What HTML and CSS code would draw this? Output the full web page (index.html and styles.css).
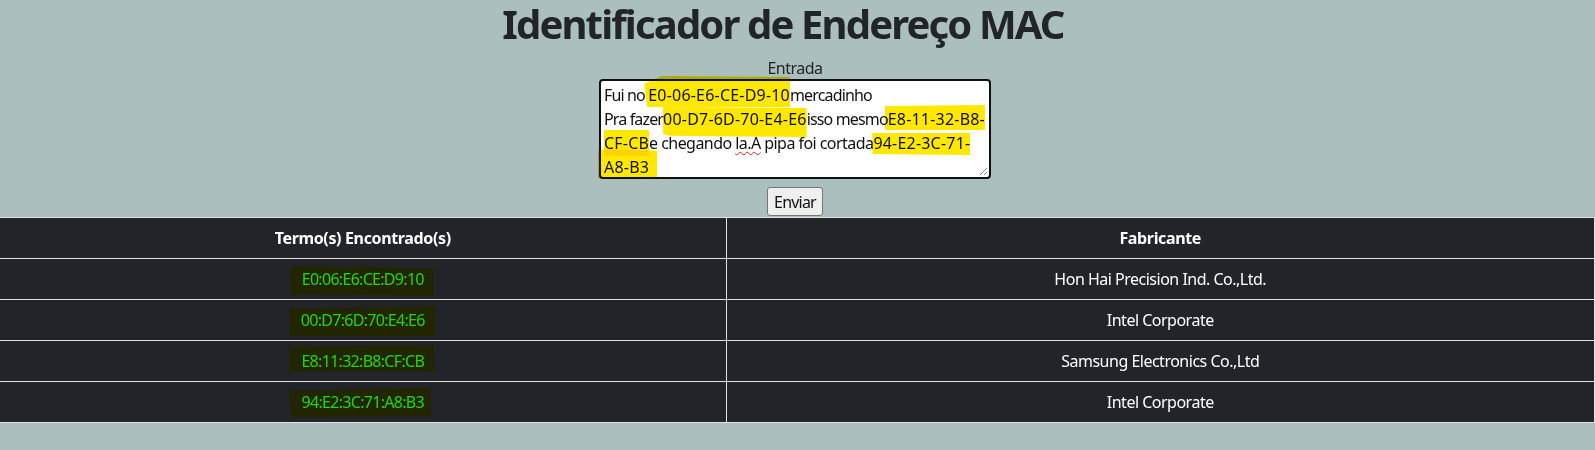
FILE: index.html
```html
<!DOCTYPE html>
<html lang="pt-BR">
<head>
<meta charset="utf-8">
<title>Identificador de Endereço MAC</title>
<link rel="stylesheet" href="styles.css">
</head>
<body>
<h1 class="title">Identificador de Endereço MAC</h1>
<form class="form">
  <label class="label">Entrada</label>
  <div class="input">
    <div class="line">Fui no <span class="mk mk1">E0-06-E6-CE-D9-10</span>mercadinho</div>
    <div class="line">Pra fazer<span class="mk mk2">00-D7-6D-70-E4-E6</span>isso mesmo<span class="mk mk3">E8-11-32-B8-</span></div>
    <div class="line"><span class="mk mk4">CF-CB</span><span class="loose">e chegando <span class="spell">la.A</span> pipa foi cortada</span><span class="mk mk5">94-E2-3C-71-</span></div>
    <div class="line"><span class="mk mk6">A8-B3</span></div>
    <svg class="grip" width="9" height="9" viewBox="0 0 9 9"><path d="M8 1 L1 8 M8 5 L5 8" stroke="#8a8a8a" stroke-width="1"/></svg>
  </div>
  <button class="btn" type="button">Enviar</button>
</form>
<table class="results">
  <colgroup><col class="col-term"><col class="col-vendor"></colgroup>
  <thead>
    <tr><th>Termo(s) Encontrado(s)</th><th>Fabricante</th></tr>
  </thead>
  <tbody>
    <tr><td><span class="cm cm1">E0:06:E6:CE:D9:10</span></td><td>Hon Hai Precision Ind. Co.,Ltd.</td></tr>
    <tr><td><span class="cm cm2">00:D7:6D:70:E4:E6</span></td><td>Intel Corporate</td></tr>
    <tr><td><span class="cm cm3">E8:11:32:B8:CF:CB</span></td><td>Samsung Electronics Co.,Ltd</td></tr>
    <tr><td><span class="cm cm4">94:E2:3C:71:A8:B3</span></td><td>Intel Corporate</td></tr>
  </tbody>
</table>
</body>
</html>
```

FILE: styles.css
```css
* { box-sizing: border-box; }
html, body { margin: 0; padding: 0; }
body {
  background: #abbfbe;
  color: #212529;
  font-family: "Noto Sans", "Open Sans", sans-serif;
  font-size: 16px;
  line-height: 1.5;
  letter-spacing: -0.5px;
  height: 450px;
  overflow: hidden;
}
.title {
  margin: 0 0 8px;
  padding-right: 29px;
  font-size: 40px;
  line-height: 48px;
  font-weight: 700;
  letter-spacing: -1.85px;
  text-align: center;
}
.form {
  display: flex;
  flex-direction: column;
  align-items: center;
  margin: 0;
  padding-right: 5px;
}
.label { line-height: 24px; }
.input {
  position: relative;
  margin-top: -1px;
  width: 392px;
  height: 100px;
  background: #fff;
  border: 2px solid #101010;
  border-radius: 4px;
  padding: 2px 3px;
  color: #111;
  line-height: 24px;
  letter-spacing: -0.85px;
  white-space: nowrap;
}
.line { height: 24px; }
.loose { letter-spacing: -0.55px; }
.spell {
  text-decoration: underline wavy #e0201c;
  text-decoration-thickness: 1px;
  text-decoration-skip-ink: none;
  text-underline-offset: 2px;
}
.grip { position: absolute; right: 1px; bottom: 1px; }
.mk, .cm { position: relative; }
.mk { letter-spacing: 0.2px; }
.mk::before, .cm::before {
  content: "";
  position: absolute;
  background: #ffe800;
  mix-blend-mode: multiply;
  pointer-events: none;
}
.mk1::before { left: -4px; right: 0; top: -8px; bottom: -1px; clip-path: polygon(0 25%, 12% 0, 100% 3%, 100% 100%, 2% 100%); }
.mk2::before { left: 0; right: 0; top: -1px; bottom: -7px; clip-path: polygon(0 0, 100% 3%, 100% 100%, 4% 96%, 0 90%); }
.mk3::before { left: -3px; right: 0; top: -3px; bottom: 0; clip-path: polygon(0 4%, 100% 0, 100% 100%, 0 100%); }
.mk4::before { left: 0; right: 0; top: -2px; bottom: -2px; }
.mk5::before { left: -1px; right: 0; top: 1px; bottom: -1px; clip-path: polygon(0 0, 100% 0, 100% 100%, 0 96%); }
.mk6::before { left: -6px; right: -8px; top: -8px; bottom: -1px; clip-path: polygon(0 5%, 100% 8%, 100% 100%, 0 98%); }
.btn {
  margin-top: 8px;
  height: 29px;
  padding: 1px 6px;
  font: inherit;
  font-size: 16px;
  line-height: 24px;
  letter-spacing: -0.8px;
  color: #111;
  background: #efefef;
  border: 1px solid #767676;
  border-radius: 3px;
}
.results {
  margin-top: 1px;
  width: 100%;
  border-collapse: collapse;
  table-layout: fixed;
  background: #212529;
  color: #fff;
}
.col-term { width: 726px; }
.results th, .results td {
  border: 1px solid #e4e0e0;
  padding: 8px;
  height: 41px;
  text-align: center;
  font-size: 16px;
  line-height: 24px;
}
.results th:first-child, .results td:first-child { border-left: none; }
.results th { font-weight: 700; letter-spacing: -0.35px; }
.cm { color: #22d818; letter-spacing: -0.7px; }
.cm::before { left: -11px; right: -10px; top: -2px; bottom: -6px; background: #ffff00; }
.cm1::before { clip-path: polygon(0 0, 100% 8%, 100% 100%, 5% 96%, 0 100%); }
.cm2::before { top: -3px; bottom: -5px; clip-path: polygon(0 8%, 100% 0, 100% 100%, 0 100%); }
.cm3::before { top: -5px; bottom: 0; left: -12px; clip-path: polygon(0 6%, 100% 0, 100% 100%, 0 100%); }
.cm4::before { top: -3px; bottom: -4px; left: -13px; right: -7px; clip-path: polygon(0 8%, 100% 0, 100% 97%, 2% 100%); }
```
